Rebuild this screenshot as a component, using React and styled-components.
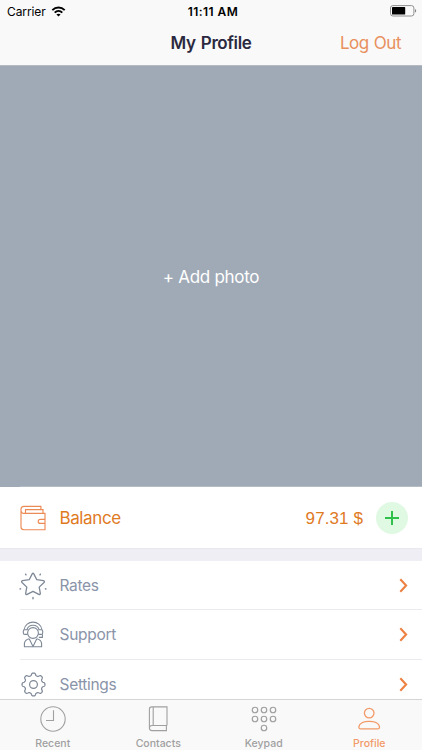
import React from 'react';
import styled, { createGlobalStyle } from 'styled-components';

const WifiIcon = () => (
  <svg width='15' height='11' viewBox='0 0 14 11' fill='none' stroke='#000' strokeWidth='1.9'>
    <path d='M0.8 4.1 C4.3 0.6 9.7 0.6 13.2 4.1' />
    <path d='M3.2 6.6 C5.4 4.5 8.6 4.5 10.8 6.6' />
    <path d='M7 10.6 L4.9 8.5 C6.1 7.4 7.9 7.4 9.1 8.5 Z' fill='#000' stroke='none' />
  </svg>
);

const BatteryIcon = () => (
  <svg width='27' height='12' viewBox='0 0 27 12'>
    <rect x='0.5' y='0.6' width='23.4' height='10.4' rx='2.4' fill='none' stroke='#858585' strokeWidth='0.9' />
    <rect x='2' y='2' width='13.2' height='7.6' rx='0.7' fill='#000' />
    <path d='M25 4 C26.6 4.4 26.6 7.2 25 7.6 Z' fill='#858585' />
  </svg>
);

const WalletIcon = () => (
  <svg width='26' height='26' viewBox='0 0 26 26' fill='none' stroke='#ec8a55' strokeWidth='1.15'>
    <path d='M20.9 4.5 V1.3 H4 C2.1 1.3 1 2.5 1 4.3 V22 C1 23.8 2.1 24.7 4 24.7 H25 V8.3 H4 C2.1 8.3 1 6.8 1 4.9' />
    <path d='M5.5 8.3 V4.6 H23 V8.3' />
    <path d='M25 14.4 H20.4 C17.5 14.4 17.5 18.4 20.4 18.4 H25' />
  </svg>
);

const StarIcon = () => (
  <svg width='28' height='28' viewBox='0 0 28 28' fill='none' stroke='#7d8796' strokeWidth='1.3' strokeLinejoin='round' strokeLinecap='round'>
    <path d='M13.2 1.9 Q14 0.6 14.8 1.9 L17.8 7.7 L24.4 8.7 Q26.2 9.2 25 10.5 L20.2 15.1 L21.3 21.2 Q21.4 23 19.8 22.3 L14 19.3 L8.2 22.3 Q6.6 23 6.7 21.2 L7.8 15.1 L3 10.5 Q1.8 9.2 3.6 8.7 L10.2 7.7 Z' />
    <path d='M6.6 2.2 l0.4 0.6 M21.4 2.2 l-0.4 0.6 M1.1 17 l0.5 -0.2 M26.9 17 l-0.5 -0.2 M14 25.4 v1.3' strokeWidth='1.4' />
  </svg>
);

const SupportIcon = () => (
  <svg width='22' height='27' viewBox='0 0 22 27' fill='none' stroke='#7d8796' strokeWidth='1.1' strokeLinejoin='round'>
    <circle cx='11' cy='12' r='5.4' />
    <path d='M2 8.8 C3.4 -1.4 18.6 -1.4 20 8.8' />
    <path d='M4.8 8.8 C6.8 2.7 15.2 2.7 17.2 8.8' />
    <path d='M5.6 8.8 H2.8 Q1.3 8.8 1.3 10.2 V12 Q1.3 13.4 2.8 13.4 H5.6 M16.4 8.8 H19.2 Q20.7 8.8 20.7 10.2 V12 Q20.7 13.4 19.2 13.4 H16.4' />
    <path d='M20.4 13.2 V16.4 H16.8' />
    <path d='M7.2 17.8 Q3 18.6 2.4 22.4 V25.8 H19.6 V22.4 Q19 18.6 14.8 17.8' />
    <path d='M7.2 17.8 L11 25.6 L14.8 17.8' />
  </svg>
);

// outline of a wheel with eight rounded teeth
const gearOutline = Array.from({ length: 160 }, (_, i) => {
  const angle = (i / 160) * Math.PI * 2;
  const radius = 10.25 + 1.3 * Math.tanh(1.7 * Math.cos(8 * angle));
  const x = 12.5 + radius * Math.sin(angle);
  const y = 12.5 - radius * Math.cos(angle);
  return `${x.toFixed(2)} ${y.toFixed(2)}`;
}).join(' L');

const GearIcon = () => (
  <svg width='25' height='25' viewBox='0 0 25 25' fill='none' stroke='#7d8796' strokeWidth='1.2' strokeLinejoin='round'>
    <circle cx='12.5' cy='12.5' r='3.9' />
    <path d={`M${gearOutline} Z`} />
  </svg>
);

const ClockIcon = () => (
  <svg width='26' height='26' viewBox='0 0 26 26' fill='none' stroke='currentColor' strokeWidth='1.1'>
    <circle cx='13' cy='13' r='12.2' />
    <path d='M13.5 4.2 V14.5 H6' />
  </svg>
);

const BookIcon = () => (
  <svg width='26' height='26' viewBox='0 0 26 26' fill='none' stroke='currentColor' strokeWidth='1.1'>
    <path d='M22 19.5 V0.9 H6.8 Q4.4 0.9 4.4 3.2 V22 Q4.4 24.6 7 24.6 H22 M22 19.5 H7 Q4.4 19.5 4.4 22 M8.2 0.9 V19.5 M21.4 19.5 V24.6' />
  </svg>
);

const KeypadIcon = () => (
  <svg width='26' height='26' viewBox='0 0 26 26' fill='none' stroke='currentColor' strokeWidth='1.2'>
    {[4, 13, 22].map((x) => (
      <circle key={x} cx={x} cy='4' r='2.75' />
    ))}
    {[4, 13, 22].map((x) => (
      <circle key={x} cx={x} cy='13' r='2.75' />
    ))}
    <circle cx='13' cy='22' r='2.75' />
  </svg>
);

const ProfileIcon = () => (
  <svg width='26' height='26' viewBox='0 0 26 26' fill='none' stroke='currentColor' strokeWidth='1.3'>
    <circle cx='13.2' cy='7.1' r='4.8' />
    <path d='M4.8 22.9 Q2.7 22.9 2.9 20.6 C3.9 13.5 22.5 13.5 23.5 20.6 Q23.7 22.9 21.6 22.9 Z' />
  </svg>
);

const ChevronIcon = () => (
  <svg width='9' height='15' viewBox='0 0 9 15' fill='none' stroke='#ed8142' strokeWidth='2.1'>
    <path d='M1.3 1.3 L7.1 7.5 L1.3 13.7' />
  </svg>
);

const menuItems = [
  { label: 'Rates', Icon: StarIcon },
  { label: 'Support', Icon: SupportIcon },
  { label: 'Settings', Icon: GearIcon },
];

const tabs = [
  { label: 'Recent', Icon: ClockIcon },
  { label: 'Contacts', Icon: BookIcon },
  { label: 'Keypad', Icon: KeypadIcon },
  { label: 'Profile', Icon: ProfileIcon },
];

class App extends React.Component {
  constructor(props) {
    super(props);
    this.state = {
      activeTab: 'Profile',
    };
    this.selectTab = this.selectTab.bind(this);
  }

  selectTab(activeTab) {
    this.setState({ activeTab });
  }

  render() {
    return (
      <StyledScreen>
        <GlobalStyle />
        <StyledStatusBar>
          <StyledCarrier>
            Carrier <WifiIcon />
          </StyledCarrier>
          <StyledTime>11:11 AM</StyledTime>
          <StyledBattery>
            <BatteryIcon />
          </StyledBattery>
        </StyledStatusBar>
        <StyledNavBar>
          <StyledTitle>My Profile</StyledTitle>
          <StyledLogOut>Log Out</StyledLogOut>
        </StyledNavBar>
        <StyledContent>
          <StyledPhoto>+ Add photo</StyledPhoto>
          <StyledBalance>
            <StyledIcon>
              <WalletIcon />
            </StyledIcon>
            <StyledBalanceLabel>Balance</StyledBalanceLabel>
            <StyledAmount>97.31 $</StyledAmount>
            <StyledAddButton aria-label='Add funds'>
              <svg width='14' height='14' viewBox='0 0 14 14' stroke='#2fc14c' strokeWidth='2'>
                <path d='M7 0 V14 M0 7 H14' />
              </svg>
            </StyledAddButton>
          </StyledBalance>
          <StyledMenu>
            {menuItems.map(({ label, Icon }) => (
              <StyledMenuRow key={label}>
                <StyledIcon>
                  <Icon />
                </StyledIcon>
                <StyledMenuLabel>{label}</StyledMenuLabel>
                <ChevronIcon />
              </StyledMenuRow>
            ))}
          </StyledMenu>
        </StyledContent>
        <StyledTabBar>
          {tabs.map(({ label, Icon }) => (
            <StyledTab
              key={label}
              $active={label === this.state.activeTab}
              onClick={() => this.selectTab(label)}
            >
              <Icon />
              <span>{label}</span>
            </StyledTab>
          ))}
        </StyledTabBar>
      </StyledScreen>
    );
  }
}

const GlobalStyle = createGlobalStyle`
  * {
    box-sizing: border-box;
  }
  body {
    margin: 0;
    font-family: Inter, 'Liberation Sans', sans-serif;
  }
  svg {
    display: block;
    flex: none;
  }
  button {
    border: 0;
    padding: 0;
    background: none;
    font: inherit;
  }
`;
const StyledScreen = styled.div`
  display: flex;
  flex-direction: column;
  width: 422px;
  height: 750px;
  overflow: hidden;
  background-color: white;
`;
const StyledStatusBar = styled.div`
  display: grid;
  grid-template-columns: 1fr auto 1fr;
  align-items: center;
  flex: none;
  height: 22px;
  padding: 0 5px 0 7px;
  background-color: #f9f9f9;
  color: black;
  font-size: 12px;
`;
const StyledCarrier = styled.div`
  display: flex;
  align-items: center;
  gap: 5px;
  letter-spacing: -0.1px;
`;
const StyledTime = styled.div`
  padding-left: 2px;
  font-weight: 600;
  letter-spacing: 0.45px;
`;
const StyledBattery = styled.div`
  display: flex;
  justify-content: flex-end;
`;
const StyledNavBar = styled.div`
  display: grid;
  grid-template-columns: 1fr auto 1fr;
  align-items: center;
  flex: none;
  height: 44px;
  padding: 0 21px;
  border-bottom: 1px solid #b6bac0;
  background-color: #f9f9f9;
`;
const StyledTitle = styled.div`
  grid-column: 2;
  margin-top: -2px;
  color: #2b2940;
  font-size: 17px;
  font-weight: 600;
  letter-spacing: -0.4px;
  word-spacing: 1.3px;
`;
const StyledLogOut = styled.button`
  justify-self: end;
  margin-top: -2px;
  color: #e8905e;
  font-size: 17px;
  letter-spacing: -0.45px;
  word-spacing: 0.6px;
`;
const StyledContent = styled.div`
  flex: 1;
  min-height: 0;
  overflow: hidden;
  background-color: #eeeef4;
`;
const StyledPhoto = styled.div`
  display: flex;
  align-items: center;
  justify-content: center;
  height: 421px;
  background: linear-gradient(#b4bcc5, #b4bcc5) 20px 100% / 100% 1px no-repeat #a0aab6;
  color: white;
  font-size: 17px;
  letter-spacing: -0.3px;
`;
const StyledBalance = styled.div`
  display: flex;
  align-items: center;
  height: 62px;
  padding-right: 14px;
  border-bottom: 1px solid #e8e8ed;
  background-color: white;
  color: #e07a1f;
  font-size: 17px;
`;
const StyledIcon = styled.div`
  display: flex;
  justify-content: center;
  flex: none;
  width: 26px;
  margin: 0 13.5px 0 20px;
`;
const StyledBalanceLabel = styled.div`
  flex: 1;
  letter-spacing: -0.4px;
`;
const StyledAmount = styled.div`
  margin-right: 13px;
  padding-top: 2px;
  font-family: 'Liberation Sans', sans-serif;
  font-size: 17px;
  letter-spacing: 0.1px;
`;
const StyledAddButton = styled.button`
  display: flex;
  align-items: center;
  justify-content: center;
  width: 32px;
  height: 32px;
  border-radius: 50%;
  background-color: #e0f9e3;
`;
const StyledMenu = styled.div`
  margin-top: 12px;
  background-color: white;
`;
const StyledMenuRow = styled.div`
  display: flex;
  align-items: center;
  height: 49.3px;
  padding-right: 14px;
  background: linear-gradient(#e9ebef, #e9ebef) 20px 100% / 100% 1px no-repeat;
`;
const StyledMenuLabel = styled.div`
  flex: 1;
  color: #8a94a9;
  font-size: 15.5px;
  letter-spacing: -0.3px;
`;
const StyledTabBar = styled.div`
  display: grid;
  grid-template-columns: repeat(4, 1fr);
  flex: none;
  height: 51px;
  border-top: 1px solid #d5d5d8;
  background-color: #f9f9f9;
`;
const StyledTab = styled.button`
  display: flex;
  flex-direction: column;
  align-items: center;
  gap: 4px;
  padding-top: 6px;
  color: ${(props) => (props.$active ? '#f29a68' : '#a0a0a0')};
  font-size: 10.5px;
  font-weight: 500;
  line-height: 15px;
`;

export default App;
